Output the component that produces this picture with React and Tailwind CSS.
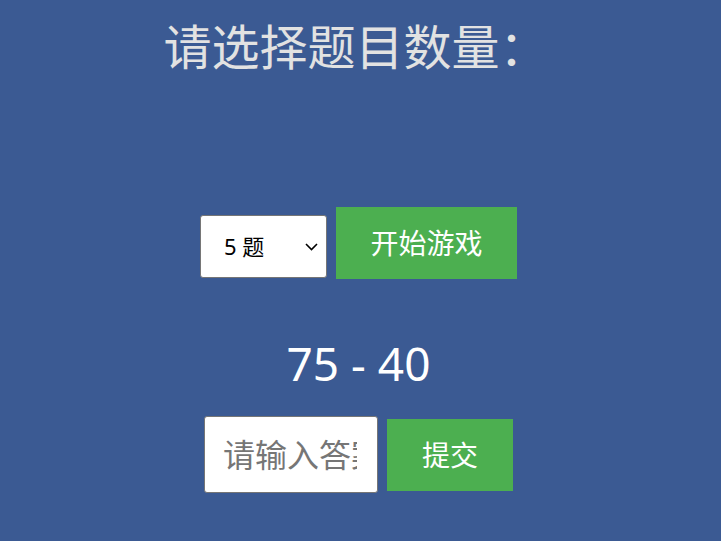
import React from "react";

export default function App() {
  const font = { fontFamily: '"Noto Sans", "Noto Sans CJK SC", sans-serif' };
  return (
    <div
      className="w-full min-h-[541px] bg-[#3b5a93] flex flex-col items-center pr-[4px]"
      style={font}
    >
      <h1 className="pt-[17px] h-[74px] leading-[60px] text-[48px] font-normal text-[#e2e2e2] text-center -translate-x-[3px]">
        请选择题目数量：
      </h1>

      <div className="mt-[133px] flex items-end gap-[9px] h-[72px]">
        <div className="relative w-[127px] h-[63px] mb-[1px]">
          <select
            defaultValue="5"
            className="appearance-none w-full h-full bg-white border border-[#767676] rounded-[3px] pl-[23px] text-[22px] text-black outline-none"
            style={font}
          >
            <option value="5">5 题</option>
            <option value="10">10 题</option>
            <option value="20">20 题</option>
          </select>
          <svg
            className="absolute right-[9px] top-[28px] pointer-events-none"
            width="13"
            height="8"
            viewBox="0 0 13 8"
          >
            <polyline
              points="1,1 6.5,6.5 12,1"
              fill="none"
              stroke="#000"
              strokeWidth="1.6"
            />
          </svg>
        </div>
        <button className="w-[181px] h-[72px] bg-[#4caf50] text-white text-[28px]">
          开始游戏
        </button>
      </div>

      <div className="mt-[54px] h-[60px] leading-[60px] text-[46px] text-white">
        75 - 40
      </div>

      <div className="mt-[23px] flex items-center gap-[9px]">
        <input
          type="text"
          placeholder="请输入答案"
          className="w-[174px] h-[77px] bg-white border border-[#767676] rounded-[3px] pl-[18px] pr-[20px] text-[32px] text-black placeholder:text-[#767676] outline-none"
          style={font}
        />
        <button className="w-[126px] h-[72px] bg-[#4caf50] text-white text-[28px]">
          提交
        </button>
      </div>
    </div>
  );
}
